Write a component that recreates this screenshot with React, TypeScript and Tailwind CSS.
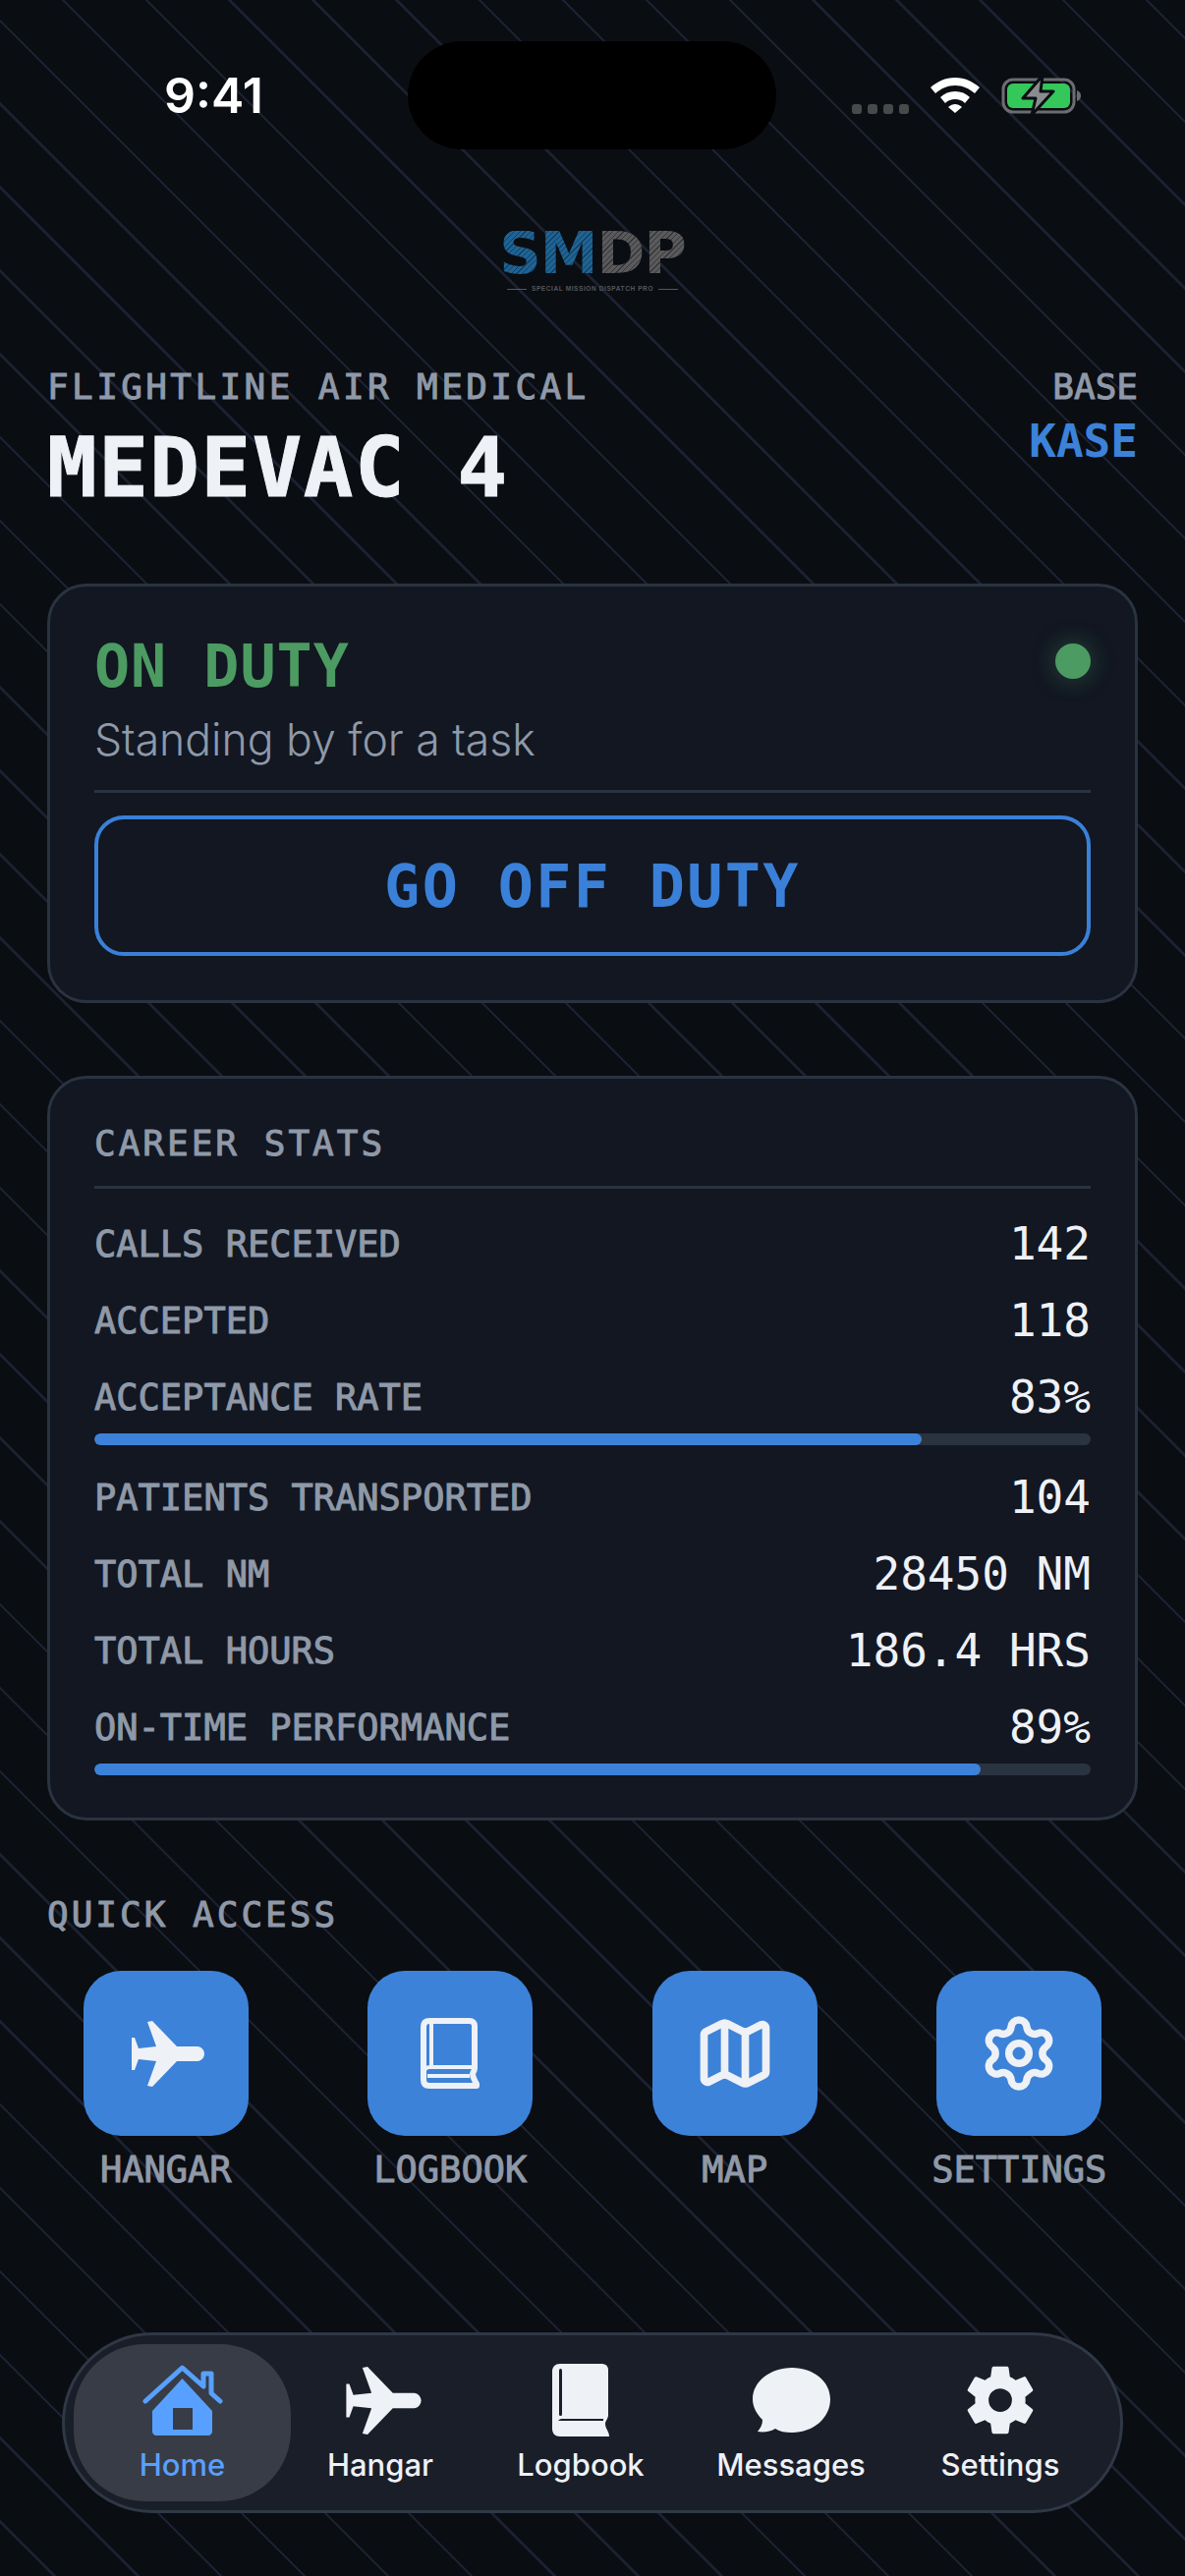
import { Settings, Map } from "lucide-react";
import { IoSettingsSharp } from "react-icons/io5";

const mono = "font-['DejaVu_Sans_Mono',monospace]";
const sans = "font-['Inter',sans-serif]";
const medium = "[-webkit-text-stroke:1px_#8f99a8]";

const PlaneIcon = ({ className }: { className?: string }) => (
  <svg viewBox="0 0 74 67" className={className} fill="currentColor">
    <path d="M16 1 L21 0 L46 26 H67 C71 26 74 30 74 33.500 C74 37 71 41 67 41 H46 L21 67 L16 66 L25 41 L7 39 L3 50 H0 V17 H3 L7 28 L25 26 Z" />
  </svg>
);

const BookOutline = () => (
  <svg viewBox="0 0 60 72" className="h-[72px] w-[60px]" fill="none" stroke="currentColor" strokeWidth="6" strokeLinejoin="round">
    <path d="M9 3 H50 C53 3 55 5 55 8 V51 C55 54 53 55 53 57 C53 61 55 63 57 67 V69 H9 C5 69 3 67 3 63 V9 C3 5 5 3 9 3 Z" />
    <path d="M11 4 V50 M3 58 C3 53 5 50 9 50 H55 M7 59 H50" strokeWidth="4" />
  </svg>
);

const BookFilled = () => (
  <svg viewBox="0 0 58 74" className="h-[74px] w-[58px]" fill="currentColor">
    <path d="M8 0 H50 C54 0 57 2 57 6 V52 C57 56 54 58 54 61 C54 66 58 69 58 74 H8 C3 74 0 71 0 66 V8 C0 3 3 0 8 0 Z" />
    <rect x="7" y="5" width="3" height="48" rx="1.500" fill="#1a1e28" />
    <path d="M6 58 C8 56 9 56 11 56 H52 V58 Z" fill="#1a1e28" />
  </svg>
);

const HomeIcon = () => (
  <svg viewBox="0 0 82 72" className="h-[72px] w-[82px]" fill="#58a0ff">
    <path d="M40.500 14 L10 47 V68 C10 70 12 72 14 72 H67 C69 72 71 70 71 68 V47 Z M31 44 H51 V66 H31 Z" fillRule="evenodd" />
    <path d="M3 37 L40.500 3 L62 22 V9 H70 V29 L79 37" fill="none" stroke="#58a0ff" strokeWidth="5" strokeLinecap="round" strokeLinejoin="round" />
  </svg>
);

const ChatIcon = () => (
  <svg viewBox="0 0 79 66" className="h-[66px] w-[79px]" fill="currentColor">
    <path d="M40 0 C62 0 79 14 79 32 C79 51 62 66 40 66 C33 66 28 65 23 62 C19 65 11 66 5 65 C8 61 10 58 10 53 C4 47 0 40 0 32 C0 14 18 0 40 0 Z" />
  </svg>
);

const Wifi = () => (
  <svg viewBox="0 0 50 36" className="h-[36px] w-[50px]" fill="white">
    <path d="M25 0 C35 0 43 4 50 10 L45 16 C39 11 33 8 25 8 C17 8 11 11 5 16 L0 10 C7 4 15 0 25 0 Z" />
    <path d="M25 14 C31 14 36 16 40 20 L35 26 C32 23 29 22 25 22 C21 22 18 23 15 26 L10 20 C14 16 19 14 25 14 Z" />
    <path d="M25 27 C27 27 30 28 32 30 L25 36 L18 30 C20 28 23 27 25 27 Z" />
  </svg>
);

const Battery = () => (
  <svg viewBox="0 0 82 42" className="h-[42px] w-[82px]">
    <rect x="2" y="5" width="72" height="33" rx="10" fill="none" stroke="#6b6d70" strokeWidth="3" />
    <rect x="6" y="9" width="64" height="25" rx="6" fill="#34c759" />
    <path d="M77 16 C80 17 81 19 81 21.500 C81 24 80 26 77 27 Z" fill="#6b6d70" />
    <path d="M42 1 L22 24 H35 L31 41 L53 17 H40 Z" fill="#8a8c8f" stroke="#0a0d12" strokeWidth="3" strokeLinejoin="round" />
  </svg>
);

const Logo = () => (
  <div className="mt-[112px] flex flex-col items-center">
    <div className="flex h-[46px] items-center font-['DejaVu_Sans',sans-serif] text-[59px] leading-[46px] font-bold tracking-[-1px]">
      <span className="bg-[repeating-linear-gradient(135deg,#1f6395_0px,#1f6395_3px,#14405f_3px,#14405f_4px)] bg-clip-text text-transparent">SM</span>
      <span className="bg-[repeating-linear-gradient(135deg,#5a5a5c_0px,#5a5a5c_3px,#353638_3px,#353638_4px)] bg-clip-text text-transparent">DP</span>
    </div>
    <div className="mt-[8px] flex items-center gap-[5px]">
      <div className="h-[1px] w-[20px] bg-[#55575a]" />
      <span className="font-['Liberation_Sans',sans-serif] text-[6.500px] leading-[10px] font-bold tracking-[0.6px] text-[#55575a]">SPECIAL MISSION DISPATCH PRO</span>
      <div className="h-[1px] w-[20px] bg-[#55575a]" />
    </div>
  </div>
);

const Row = ({ label, value, bar }: { label: string; value: string; bar?: number }) => (
  <div>
    <div className="flex h-[78px] items-center justify-between">
      <span className={`text-[37px] text-[#8f99a8] ${medium}`}>{label}</span>
      <span className="mt-[-2px] text-[46px] text-[#eef1f6]">{value}</span>
    </div>
    {bar !== undefined && (
      <div className="mt-[-3px] mb-[15px] h-[12px] overflow-hidden rounded-full bg-[#2a3340]">
        <div className="h-full rounded-full bg-[#3c82d9]" style={{ width: `${bar}%` }} />
      </div>
    )}
  </div>
);

const QuickTile = ({ label, children }: { label: string; children: React.ReactNode }) => (
  <div className="flex flex-col items-center">
    <div className="flex h-[168px] w-[168px] items-center justify-center rounded-[38px] bg-[#3c82d9] text-[#eef1f6]">{children}</div>
    <span className={`mt-[10px] text-[37px] leading-[50px] text-[#8f99a8] ${medium}`}>{label}</span>
  </div>
);

const NavItem = ({ label, children, className }: { label: string; children: React.ReactNode; className: string }) => (
  <div className={`flex flex-col items-center ${className}`}>
    <div className="flex h-[80px] items-center justify-center">{children}</div>
    <span className="mt-[6px] text-[31px] leading-[40px] font-medium">{label}</span>
  </div>
);

export default function App() {
  return (
    <div className={`relative h-[2622px] w-[1206px] overflow-hidden bg-[#0a0d12] bg-[repeating-linear-gradient(45deg,transparent_0px,transparent_38px,#1b2130_38px,#1b2130_40.500px,transparent_40.500px,transparent_60px)] ${mono}`}>
      <div className="absolute top-[42px] left-[415px] h-[110px] w-[375px] rounded-full bg-black" />

      <div className="flex h-[123px] items-end justify-between pr-[105px] pl-[167px]">
        <span className={`${sans} text-[50px] leading-[52px] font-semibold text-white`}>9:41</span>
        <div className="mb-[5px] flex items-center gap-[22px]">
          <div className="mt-[28px] flex gap-[6px]">
            <div className="h-[10px] w-[10px] rounded-[3px] bg-[#48494b]" />
            <div className="h-[10px] w-[10px] rounded-[3px] bg-[#48494b]" />
            <div className="h-[10px] w-[10px] rounded-[3px] bg-[#48494b]" />
            <div className="h-[10px] w-[10px] rounded-[3px] bg-[#48494b]" />
          </div>
          <Wifi />
          <Battery />
        </div>
      </div>

      <Logo />

      <div className="mt-[75px] flex items-start justify-between px-[48px]">
        <div>
          <div className={`text-[36px] leading-[40px] tracking-[3.400px] text-[#8f99a8] ${medium}`}>FLIGHTLINE AIR MEDICAL</div>
          <div className="mt-[20px] text-[84px] leading-[84px] font-bold tracking-[1.600px] text-[#eef1f6] [-webkit-text-stroke:1px_#eef1f6]">MEDEVAC 4</div>
        </div>
        <div className="text-right">
          <div className={`text-[36px] leading-[40px] text-[#8f99a8] ${medium}`}>BASE</div>
          <div className="mt-[10px] text-[46px] leading-[50px] font-bold text-[#3c82d9]">KASE</div>
        </div>
      </div>

      <div className="mx-[48px] mt-[76px] h-[427px] rounded-[40px] border-[3px] border-[#2a3340] bg-[#121722] px-[45px]">
        <div className="flex items-start justify-between pt-[48px]">
          <span className="text-[60px] leading-[66px] font-bold tracking-[1px] text-[#4c9b62]">ON DUTY</span>
          <div className="mt-[10px] h-[36px] w-[36px] rounded-full bg-[#4c9b62] shadow-[0_0_24px_#4c9b6266]" />
        </div>
        <div className={`${sans} mt-[14px] text-[44.500px] leading-[56px] font-light text-[#8f99a8]`}>Standing by for a task</div>
        <div className="mt-[23px] h-[3px] bg-[#2a3340]" />
        <div className="mt-[23px] flex h-[143px] items-center justify-center rounded-[30px] border-[4px] border-[#3a80d8] text-[60px] font-bold tracking-[2.400px] text-[#3a80d8]">GO OFF DUTY</div>
      </div>

      <div className="mx-[48px] mt-[74px] h-[758px] rounded-[40px] border-[3px] border-[#2a3340] bg-[#121722] px-[45px]">
        <div className={`pt-[46px] text-[36px] leading-[40px] tracking-[3px] text-[#8f99a8] ${medium}`}>CAREER STATS</div>
        <div className="mt-[23px] mb-[18px] h-[3px] bg-[#2a3340]" />
        <Row label="CALLS RECEIVED" value="142" />
        <Row label="ACCEPTED" value="118" />
        <Row label="ACCEPTANCE RATE" value="83%" bar={83} />
        <Row label="PATIENTS TRANSPORTED" value="104" />
        <Row label="TOTAL NM" value="28450 NM" />
        <Row label="TOTAL HOURS" value="186.4 HRS" />
        <Row label="ON-TIME PERFORMANCE" value="89%" bar={89} />
      </div>

      <div className={`mt-[76px] px-[48px] text-[36px] leading-[40px] tracking-[3px] text-[#8f99a8] ${medium}`}>QUICK ACCESS</div>
      <div className="mt-[37px] grid grid-cols-4 px-[24px]">
        <QuickTile label="HANGAR"><PlaneIcon className="ml-[4px] h-[67px] w-[74px]" /></QuickTile>
        <QuickTile label="LOGBOOK"><BookOutline /></QuickTile>
        <QuickTile label="MAP"><Map size={84} strokeWidth={2.200} /></QuickTile>
        <QuickTile label="SETTINGS"><Settings size={82} strokeWidth={2.200} /></QuickTile>
      </div>

      <div className={`${sans} mx-[63px] mt-[140px] flex h-[184px] items-center rounded-[92px] border-[3px] border-[#2f3846] bg-[#1a1e28] pl-[9px] text-[#eef1f6]`}>
        <NavItem label="Home" className="h-[160px] w-[221px] justify-center rounded-[72px] bg-[#383c46] text-[#58a0ff]"><HomeIcon /></NavItem>
        <NavItem label="Hangar" className="ml-[36px] w-[110px]"><PlaneIcon className="ml-[6px] h-[69px] w-[77px]" /></NavItem>
        <NavItem label="Logbook" className="ml-[84px] w-[130px]"><BookFilled /></NavItem>
        <NavItem label="Messages" className="ml-[74px] w-[150px]"><ChatIcon /></NavItem>
        <NavItem label="Settings" className="ml-[76px] w-[124px]"><IoSettingsSharp size={76} /></NavItem>
      </div>
    </div>
  );
}
